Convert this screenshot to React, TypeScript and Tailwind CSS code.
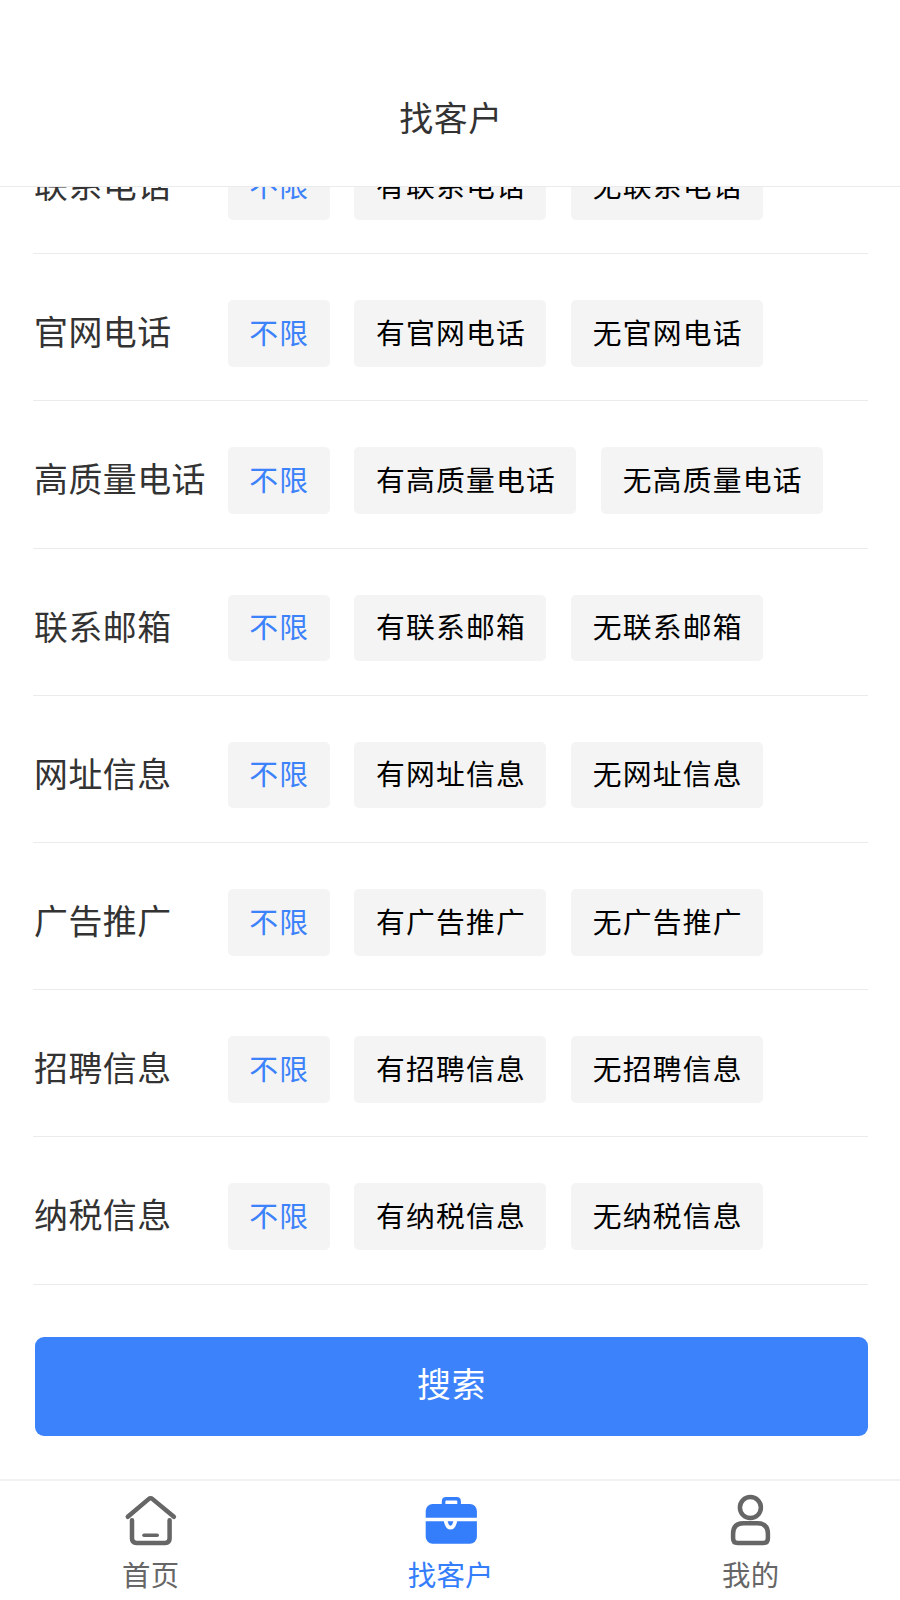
import { useState } from "react"
import clsx from "clsx"

const filters = [
  "联系电话",
  "官网电话",
  "高质量电话",
  "联系邮箱",
  "网址信息",
  "广告推广",
  "招聘信息",
  "纳税信息",
]

function HomeIcon() {
  return (
    <svg width="56" height="56" viewBox="0 0 56 56" fill="none" stroke="currentColor" strokeLinecap="round" strokeLinejoin="round">
      <path d="M5.8 22.8 L26.6 5.1 Q28.6 3.4 30.6 5.1 L51.9 22.8" strokeWidth="4.5" />
      <path d="M10 26.3 V44.5 Q10 48.9 14.4 48.9 H43.2 Q47.6 48.9 47.6 44.5 V26.3" strokeWidth="4.5" />
      <path d="M22 41.3 H35.2" strokeWidth="3.6" />
    </svg>
  )
}

function BriefcaseIcon() {
  return (
    <svg width="56" height="56" viewBox="0 0 56 56" fill="none">
      <path d="M21.6 12 V7.4 Q21.6 4.8 24.2 4.8 H34.5 Q37.1 4.8 37.1 7.4 V12" stroke="currentColor" strokeWidth="3.6" />
      <rect x="3.7" y="10" width="51.2" height="39.7" rx="7" fill="currentColor" />
      <path d="M3 25.5 H56" stroke="white" strokeWidth="3.3" />
      <path d="M23.5 26 Q24.8 33.6 28.5 33.6 Q32.2 33.6 33.5 26" stroke="white" strokeWidth="3.8" />
    </svg>
  )
}

function UserIcon() {
  return (
    <svg width="56" height="56" viewBox="0 0 56 56" fill="none" stroke="currentColor" strokeWidth="4.5">
      <circle cx="28.4" cy="13.6" r="10.5" />
      <path d="M21.5 29.3 H35.5 Q45.9 29.3 45.9 39.7 V44.5 Q45.9 49 41.4 49 H15.6 Q11.1 49 11.1 44.5 V39.7 Q11.1 29.3 21.5 29.3 Z" />
    </svg>
  )
}

const tabs = [
  { id: "home", label: "首页", icon: HomeIcon },
  { id: "find", label: "找客户", icon: BriefcaseIcon },
  { id: "mine", label: "我的", icon: UserIcon },
]

function FilterRow({ name }: { name: string }) {
  const [selected, setSelected] = useState(0)
  const options = ["不限", "有" + name, "无" + name]

  return (
    <div className="flex h-[147.2px] shrink-0 items-start border-b border-[#ebebeb] pt-[46px]">
      <span className="ml-[1px] w-[193.6px] shrink-0 whitespace-nowrap text-[33.9px] leading-[61.6px] tracking-[0.5px] text-[#333]">
        {name}
      </span>
      <div className="flex gap-[24.8px]">
        {options.map((option, i) => (
          <button
            key={option}
            onClick={() => setSelected(i)}
            className={clsx(
              "h-[66.6px] whitespace-nowrap rounded-[5px] bg-[#f4f4f4] pl-[21.6px] pr-[20.4px] pb-[3.2px] text-[28.8px] leading-[62px] tracking-[1.2px]",
              selected === i ? "text-[#3c82fb]" : "text-black",
            )}
          >
            {option}
          </button>
        ))}
      </div>
    </div>
  )
}

export default function App() {
  const [active, setActive] = useState("find")

  return (
    <div className="flex h-[1600px] w-[900px] flex-col overflow-hidden bg-white font-['Noto_Sans_CJK_SC',sans-serif]">
      <header className="flex h-[187px] shrink-0 items-end justify-center border-b border-[#ebebeb] pb-[43px] pl-[2px]">
        <h1 className="text-[33.9px] leading-[52px] tracking-[0.6px] text-[#333]">找客户</h1>
      </header>

      {/* Filter list, scrolled part of the way under the header */}
      <main className="flex min-h-0 flex-1 flex-col overflow-hidden pl-[33px] pr-[32px]">
        <div className="-mt-[80px] flex flex-col">
          {filters.map((name) => (
            <FilterRow key={name} name={name} />
          ))}
          <button className="ml-[2px] mt-[52px] h-[99px] rounded-[9px] bg-[#3c82fb] pb-[6px] text-[33.9px] tracking-[0.5px] text-white">
            搜索
          </button>
        </div>
      </main>

      {/* Bottom tab bar */}
      <nav className="flex h-[121px] shrink-0 border-t-2 border-[#f2f2f2]">
        {tabs.map((tab) => (
          <button
            key={tab.id}
            onClick={() => setActive(tab.id)}
            className={clsx(
              "flex flex-1 flex-col items-center pt-[13px]",
              active === tab.id ? "text-[#347dfb]" : "text-[#666]",
            )}
          >
            <tab.icon />
            <span className="mt-[3px] pl-[1.5px] text-[28.4px] leading-[42px] tracking-[0.3px]">{tab.label}</span>
          </button>
        ))}
      </nav>
    </div>
  )
}
